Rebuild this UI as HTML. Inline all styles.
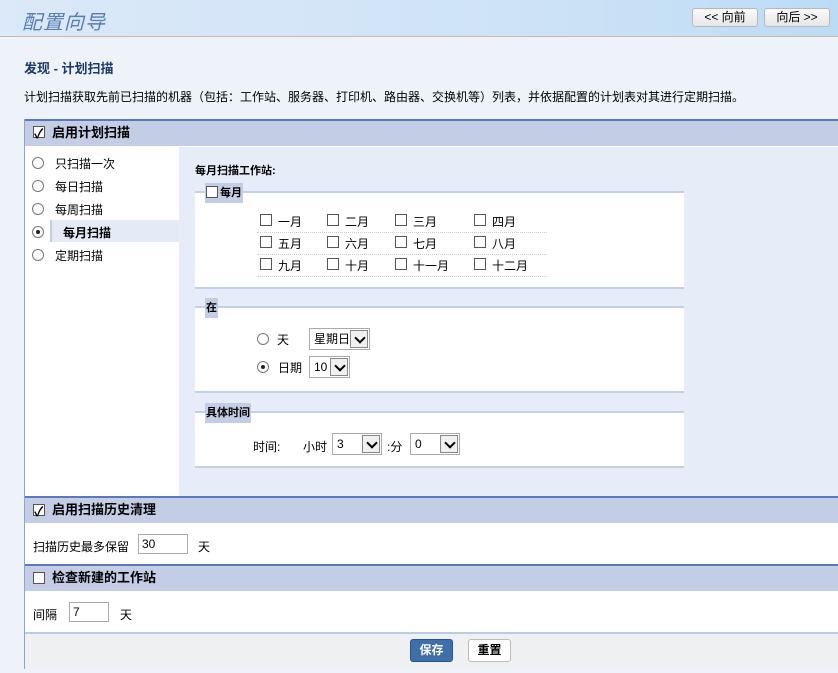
<!DOCTYPE html>
<html><head><meta charset="utf-8"><style>
*{margin:0;padding:0;box-sizing:border-box}
body{width:838px;height:673px;overflow:hidden;background:#eef3fa;font-family:"Liberation Sans","Noto Sans CJK SC",sans-serif;font-size:12px;color:#000;position:relative}
.abs{position:absolute}
.top{left:0;top:0;width:838px;height:37px;background:linear-gradient(90deg,#dbe9f8,#cfe3f7 60%,#bcdcf5);border-bottom:1px solid #c8b8a8}
.title{left:22px;top:6px;font-size:20px;font-style:italic;color:#5a7db0;letter-spacing:1px}
.btn{top:8px;height:19px;border:1px solid #b8b8b8;border-radius:3px;background:linear-gradient(#fafafa,#e6e6e6);font-size:12px;text-align:center;line-height:17px}
.h1{left:24px;top:58px;font-weight:bold;font-size:13px;color:#1c3a66}
.desc{left:24px;top:88px;font-size:12px}
.panel{left:24px;top:119px;width:814px;height:550px;border-left:1px solid #8aa4d8;background:#fff}
.hdr{position:absolute;left:0;width:814px;height:27px;background:#c4cde6;border-top:2px solid #5c78b8;font-weight:bold;font-size:13px;line-height:24px;padding-left:27px}
.cb{position:absolute;width:12px;height:12px;border:1px solid #555;background:#fff}
.cb.on::after{content:"✓";position:absolute;left:0;top:-4px;font-size:13px;font-weight:bold}
.rd{position:absolute;width:12px;height:12px;border:1px solid #777;border-radius:50%;background:#fff}
.rd.on::after{content:"";position:absolute;left:3px;top:3px;width:4px;height:4px;border-radius:50%;background:#222}
.right{left:154px;top:28px;width:660px;height:350px;background:#e6edf8}
.fs{position:absolute;left:16px;width:489px;background:#fff;border-top:2px solid #c4d0ea;border-bottom:2px solid #c4d0ea}
.lg{position:absolute;left:10px;top:-10px;background:#c4cde6;font-weight:bold;font-size:11px;padding:2px 1px;height:20px;line-height:16px}
.sel{position:absolute;height:22px;border:1px solid #aaa;background:#fff;font-size:12px;line-height:20px;padding-left:4px}
.sel i{position:absolute;right:1px;top:1px;width:18px;height:18px;border:1px solid #888;background:#f0f0f0}
.sel i::after{content:"";position:absolute;left:5px;top:3px;width:6px;height:6px;border-right:2px solid #000;border-bottom:2px solid #000;transform:rotate(45deg)}
.inp{position:absolute;height:20px;border:1px solid #aaa;background:#fff;padding-left:3px;line-height:18px}
.mrow{position:absolute;left:62px;width:290px;border-bottom:1px dotted #ccc;height:22px}
</style></head><body>
<div class="abs top"></div>
<div class="abs title">配置向导</div>
<div class="abs btn" style="left:692px;width:66px">&lt;&lt; 向前</div>
<div class="abs btn" style="left:764px;width:66px">向后 &gt;&gt;</div>
<div class="abs h1">发现 - 计划扫描</div>
<div class="abs desc">计划扫描获取先前已扫描的机器（包括：工作站、服务器、打印机、路由器、交换机等）列表，并依据配置的计划表对其进行定期扫描。</div>
<div class="abs panel">
 <div class="hdr" style="top:0">启用计划扫描</div><div class="cb on" style="left:8px;top:7px"></div>
 <div class="rd" style="left:7px;top:38px"></div><div class="abs" style="left:30px;top:36px">只扫描一次</div>
 <div class="rd" style="left:7px;top:61px"></div><div class="abs" style="left:30px;top:59px">每日扫描</div>
 <div class="rd" style="left:7px;top:84px"></div><div class="abs" style="left:30px;top:82px">每周扫描</div>
 <div class="abs" style="left:25px;top:101px;width:129px;height:22px;background:#e4eaf6;border-left:2px solid #c4cde6"></div>
 <div class="rd on" style="left:7px;top:107px"></div><div class="abs" style="left:38px;top:105px;font-weight:bold">每月扫描</div>
 <div class="rd" style="left:7px;top:130px"></div><div class="abs" style="left:30px;top:128px">定期扫描</div>
 <div class="abs right">
  <div class="abs" style="left:16px;top:15px;font-weight:bold;font-size:11px">每月扫描工作站:</div>
  <div class="fs" style="top:44px;height:98px">
   <div class="lg"><span class="cb" style="position:relative;display:inline-block;vertical-align:-2px;margin-right:2px"></span>每月</div>
   <div class="mrow" style="top:18px"></div><div class="mrow" style="top:40px"></div><div class="mrow" style="top:62px"></div>
   <div style="position:absolute;left:0;top:0;width:489px;height:98px;font-size:12px">
    <div class="cb" style="left:65px;top:21px"></div><div class="abs" style="left:83px;top:20px">一月</div>
    <div class="cb" style="left:132px;top:21px"></div><div class="abs" style="left:150px;top:20px">二月</div>
    <div class="cb" style="left:200px;top:21px"></div><div class="abs" style="left:218px;top:20px">三月</div>
    <div class="cb" style="left:279px;top:21px"></div><div class="abs" style="left:297px;top:20px">四月</div>
    <div class="cb" style="left:65px;top:43px"></div><div class="abs" style="left:83px;top:42px">五月</div>
    <div class="cb" style="left:132px;top:43px"></div><div class="abs" style="left:150px;top:42px">六月</div>
    <div class="cb" style="left:200px;top:43px"></div><div class="abs" style="left:218px;top:42px">七月</div>
    <div class="cb" style="left:279px;top:43px"></div><div class="abs" style="left:297px;top:42px">八月</div>
    <div class="cb" style="left:65px;top:65px"></div><div class="abs" style="left:83px;top:64px">九月</div>
    <div class="cb" style="left:132px;top:65px"></div><div class="abs" style="left:150px;top:64px">十月</div>
    <div class="cb" style="left:200px;top:65px"></div><div class="abs" style="left:218px;top:64px">十一月</div>
    <div class="cb" style="left:279px;top:65px"></div><div class="abs" style="left:297px;top:64px">十二月</div>
   </div>
  </div>
  <div class="fs" style="top:159px;height:87px">
   <div class="lg">在</div>
   <div class="rd" style="left:62px;top:25px"></div><div class="abs" style="left:82px;top:23px">天</div>
   <div class="sel" style="left:114px;top:20px;width:61px">星期日<i></i></div>
   <div class="rd on" style="left:62px;top:53px"></div><div class="abs" style="left:83px;top:51px">日期</div>
   <div class="sel" style="left:114px;top:48px;width:41px">10<i></i></div>
  </div>
  <div class="fs" style="top:264px;height:57px">
   <div class="lg">具体时间</div>
   <div class="abs" style="left:58px;top:25px">时间:</div>
   <div class="abs" style="left:108px;top:25px">小时</div>
   <div class="sel" style="left:137px;top:20px;width:50px">3<i></i></div>
   <div class="abs" style="left:192px;top:25px">:分</div>
   <div class="sel" style="left:215px;top:20px;width:50px">0<i></i></div>
  </div>
 </div>
 <div class="hdr" style="top:377px">启用扫描历史清理</div><div class="cb on" style="left:8px;top:385px"></div>
 <div class="abs" style="left:8px;top:419px">扫描历史最多保留</div>
 <div class="inp" style="left:113px;top:415px;width:50px">30</div>
 <div class="abs" style="left:173px;top:419px">天</div>
 <div class="hdr" style="top:445px">检查新建的工作站</div><div class="cb" style="left:8px;top:453px"></div>
 <div class="abs" style="left:8px;top:487px">间隔</div>
 <div class="inp" style="left:44px;top:483px;width:40px">7</div>
 <div class="abs" style="left:95px;top:487px">天</div>
 <div class="abs" style="left:0;top:513px;width:814px;height:37px;background:#eef0f2;border-top:2px solid #b8cce8"></div>
 <div class="abs" style="left:385px;top:520px;width:43px;height:23px;background:#3f6fa8;border:1px solid #2c5488;border-radius:3px;color:#fff;font-weight:bold;text-align:center;line-height:21px">保存</div>
 <div class="abs" style="left:443px;top:520px;width:43px;height:23px;background:#fff;border:1px solid #bbb;border-radius:3px;font-weight:bold;text-align:center;line-height:21px">重置</div>
</div>
</body></html>
